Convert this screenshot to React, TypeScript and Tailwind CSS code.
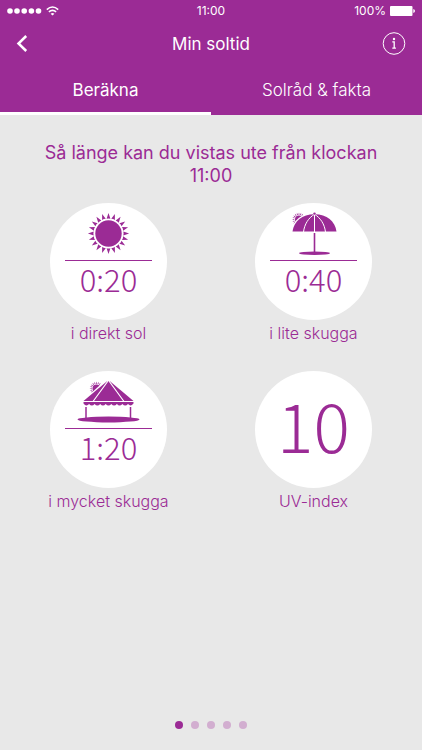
import { useState } from "react";
import type { ReactNode } from "react";

const TABS = ["Beräkna", "Solråd & fakta"];
const PAGES = [0, 1, 2, 3, 4];

const SUN_RAYS = Array.from({ length: 20 }, (_, i) => i * 18);

function SmallSun({ x, y }: { x: number; y: number }) {
  return (
    <g transform={`translate(${x} ${y})`}>
      <circle r="4" fill="currentColor" />
      {SUN_RAYS.map((angle) => (
        <path
          key={angle}
          d="M-0.6 -4.8L0 -7L0.6 -4.8Z"
          fill="currentColor"
          transform={`rotate(${angle})`}
        />
      ))}
    </g>
  );
}

function SunIcon() {
  return (
    <svg width="88" height="46" viewBox="0 0 88 46" aria-hidden="true">
      <g transform="translate(43.5 22.5)" fill="currentColor">
        <circle r="13.2" />
        {SUN_RAYS.map((angle) => (
          <path key={angle} d="M-1.9 -14.8Q0 -15.4 1.9 -14.8L0 -20.6Z" transform={`rotate(${angle})`} />
        ))}
      </g>
    </svg>
  );
}

function ParasolIcon() {
  return (
    <svg width="88" height="46" viewBox="0 0 88 46" aria-hidden="true">
      <SmallSun x={29} y={8.5} />
      <path
        d="M22.5 20.5C24 10 32 3.2 44.500 3.2S65 10 66.500 20.5Q61 19 56 20.5Q50 19 44.500 20.5Q39 19 33 20.5Q28 19 22.5 20.5Z"
        fill="currentColor"
        stroke="white"
        strokeWidth="2.2"
      />
      <path
        d="M22.5 20.5C24 10 32 3.2 44.500 3.2S65 10 66.500 20.5Z"
        fill="currentColor"
      />
      <path d="M44.500 3.2C38.500 7 34.500 13 33.500 21M44.500 3.2V21M44.500 3.2C50.500 7 54.500 13 55.500 21" fill="none" stroke="white" strokeWidth="1" />
      <circle cx="44.500" cy="2.6" r="1.200" fill="currentColor" />
      <path d="M43.700 22H45.300V42H43.700Z" fill="currentColor" />
      <ellipse cx="44.500" cy="42.3" rx="15.500" ry="1.700" fill="currentColor" />
    </svg>
  );
}

function PavilionIcon() {
  return (
    <svg width="88" height="46" viewBox="0 0 88 46" aria-hidden="true">
      <SmallSun x={31.5} y={9.500} />
      <path d="M41 2L19 22H68L46 2Z" fill="white" stroke="white" strokeWidth="2" />
      <path d="M42.300 2H44.700L68.500 22H18.500Z" fill="currentColor" />
      <path d="M43 2L28 22.500M44 2L59 22.500" fill="none" stroke="white" strokeWidth="1.200" />
      <path
        d="M18.500 23H68.500V24.500Q65.700 28 63 25Q60.200 28 57.400 25Q54.600 28 51.900 25Q49.100 28 46.300 25Q43.500 28 40.700 25Q38 28 35.200 25Q32.400 28 29.600 25Q26.900 28 24.100 25Q21.300 28 18.500 24.500Z"
        fill="currentColor"
      />
      <path d="M21 28V39M65.500 28V39" stroke="currentColor" strokeWidth="1.500" />
      <ellipse cx="43.500" cy="40.500" rx="31" ry="3" fill="currentColor" />
    </svg>
  );
}

interface SunTimeProps {
  label: string;
  time: string;
  icon: ReactNode;
}

function SunTime({ label, time, icon }: SunTimeProps) {
  return (
    <div className="flex flex-col items-center">
      <div className="flex h-[117px] w-[117px] flex-col items-center rounded-full bg-white pt-2">
        {icon}
        <div className="mt-[3px] h-px w-[87px] bg-[#9b2b95]" />
        <div className="mt-[2px] font-['Noto_Sans_CJK_SC',sans-serif] text-[31px] leading-8 font-light">{time}</div>
      </div>
      <div className="text-[16px] leading-[26px] font-light">{label}</div>
    </div>
  );
}

function StatusBar() {
  return (
    <div className="grid h-[22px] grid-cols-3 items-center px-[7px] text-[12px]">
      <div className="flex items-center gap-1">
        <svg width="35" height="6" viewBox="0 0 35 6" fill="currentColor" aria-hidden="true">
          {[3, 10, 17.2, 24.4, 31.5].map((cx) => (
            <circle key={cx} cx={cx} cy="3" r="2.8" />
          ))}
        </svg>
        <svg width="13" height="10" viewBox="0 0 13 10" fill="none" stroke="currentColor" strokeWidth="1.6" aria-hidden="true">
          <path d="M0.8 3.6Q6.5 -1.6 12.2 3.6M2.9 5.9Q6.5 2.7 10.1 5.9" />
          <path d="M6.5 9.5L4.6 7.7Q6.5 6.2 8.4 7.7Z" fill="currentColor" stroke="none" />
        </svg>
      </div>
      <div className="text-center">11:00</div>
      <div className="flex items-center justify-end gap-1">
        <span>100%</span>
        <svg width="25" height="10" viewBox="0 0 25 10" fill="currentColor" aria-hidden="true">
          <rect width="22.5" height="10" rx="1" />
          <path d="M23.3 3Q25 3.5 25 5T23.3 7Z" />
        </svg>
      </div>
    </div>
  );
}

export default function App() {
  const [activeTab, setActiveTab] = useState(0);
  const [page, setPage] = useState(0);

  return (
    <div className="flex min-h-screen flex-col bg-[#e8e8e8] font-['Inter',sans-serif] text-[#9b2b95]">
      <header className="bg-[#9b2b95] text-white">
        <StatusBar />
        <div className="flex h-[43px] items-center justify-between px-4">
          <button type="button" aria-label="Tillbaka" className="flex w-6">
            <svg width="12" height="18" viewBox="0 0 12 18" fill="none" stroke="currentColor" strokeWidth="2.5" aria-hidden="true">
              <path d="M10.2 1L2.5 8.5L10.2 16" />
            </svg>
          </button>
          <h1 className="text-[17px] leading-6">Min soltid</h1>
          <button type="button" aria-label="Information" className="flex">
            <svg width="24" height="24" viewBox="0 0 24 24" aria-hidden="true">
              <circle cx="12" cy="11.5" r="10.8" fill="none" stroke="currentColor" strokeWidth="1" />
              <circle cx="12" cy="7" r="1.2" fill="currentColor" />
              <path d="M10.3 9.8H12.2V16M10.3 16.2H13.9" fill="none" stroke="currentColor" strokeWidth="1.3" />
            </svg>
          </button>
        </div>
        <nav className="grid h-[50px] grid-cols-2">
          {TABS.map((tab, index) => (
            <button
              key={tab}
              type="button"
              onClick={() => setActiveTab(index)}
              className={
                index === activeTab
                  ? "border-b-3 border-white pt-1 text-[17px]"
                  : "border-b-3 border-transparent pt-1 text-[17px] font-light"
              }
            >
              {tab}
            </button>
          ))}
        </nav>
      </header>

      <main className="flex-1 px-[6px] pt-[26px]">
        <h2 className="px-6 text-center text-[18px] leading-[23px]">
          Så länge kan du vistas ute från klockan 11:00
        </h2>
        <div className="mt-4 grid grid-cols-2 gap-y-[25px]">
          <SunTime label="i direkt sol" time="0:20" icon={<SunIcon />} />
          <SunTime label="i lite skugga" time="0:40" icon={<ParasolIcon />} />
          <SunTime label="i mycket skugga" time="1:20" icon={<PavilionIcon />} />
          <div className="flex flex-col items-center">
            <div className="flex h-[117px] w-[117px] items-center justify-center rounded-full bg-white pb-3 font-['Noto_Sans_CJK_SC',sans-serif] text-[68px] leading-none font-light">
              10
            </div>
            <div className="text-[16px] leading-[26px] font-light">UV-index</div>
          </div>
        </div>
      </main>

      <footer className="flex justify-center gap-2 pb-[21px]">
        {PAGES.map((index) => (
          <button
            key={index}
            type="button"
            aria-label={`Sida ${index + 1}`}
            onClick={() => setPage(index)}
            className={
              index === page
                ? "h-2 w-2 rounded-full bg-[#9b2b95]"
                : "h-2 w-2 rounded-full bg-[#d2aed0]"
            }
          />
        ))}
      </footer>
    </div>
  );
}
